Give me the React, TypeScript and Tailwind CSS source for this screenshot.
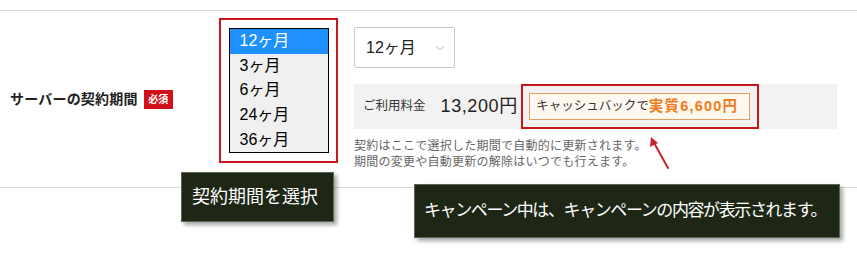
import React from 'react';

const jp = { fontFamily: '"Liberation Sans", "Noto Sans CJK JP", sans-serif' };

const periods = ['12ヶ月', '3ヶ月', '6ヶ月', '24ヶ月', '36ヶ月'];

export default function App() {
  return (
    <div className="relative w-[857px] h-[255px] bg-white overflow-hidden text-[#333]" style={jp}>
      <div className="h-[10px]" />
      <div className="flex h-[178px] border-t border-b border-[#d9d9d9]">
        {/* label */}
        <div className="w-[219px] flex items-center pl-[10px]">
          <span className="text-[14px] font-bold tracking-[0.2px] text-[#222]">サーバーの契約期間</span>
          <span className="ml-[6px] w-[29px] h-[19px] bg-[#d0111b] text-white text-[10px] font-bold flex items-center justify-center">
            必須
          </span>
        </div>

        {/* listbox, outlined in red */}
        <div className="self-start mt-[7px] w-[119px] h-[145px] border-2 border-[#c8161d] flex items-center justify-center">
          <div className="w-[100px] h-[125px] border border-black bg-[#f0f0f0] flex flex-col">
            {periods.map((p, i) => (
              <div
                key={p}
                className={
                  i === 0
                    ? 'h-[24.6px] pl-[10px] flex items-center text-[16px] bg-[#1e90ff] text-white'
                    : 'h-[24.6px] pl-[10px] flex items-center text-[16px] text-black'
                }
              >
                {p}
              </div>
            ))}
          </div>
        </div>

        {/* right column */}
        <div className="ml-[16px] pt-[16px] flex flex-col">
          <div className="w-[101px] h-[41px] border border-[#c8c8c8] rounded-[2px] flex items-center justify-between pl-[11px] pr-[9px]">
            <span className="text-[16px] text-[#222]">12ヶ月</span>
            <svg width="10" height="6" viewBox="0 0 10 6" fill="none">
              <path d="M1 1l4 4 4-4" stroke="#b5b5b5" strokeWidth="1" />
            </svg>
          </div>

          <div className="mt-[16px] w-[483px] h-[45px] bg-[#f2f2f2] flex items-center pl-[9px]">
            <span className="text-[12.5px] text-[#333]">ご利用料金</span>
            <span className="ml-[15px] text-[18px] tracking-[0.6px] text-[#222]">13,200円</span>
            <div className="ml-[3px] w-[238px] h-[45px] border-2 border-[#c8161d] flex items-center justify-center">
              <div className="w-[221px] h-[27px] border border-[#e4a062] bg-[#fff8ef] flex items-center pl-[6px]">
                <span className="text-[12.5px] text-[#333]">キャッシュバックで</span>
                <span className="text-[14.5px] font-bold text-[#f07b1c] tracking-[1.2px]">実質6,600円</span>
              </div>
            </div>
          </div>

          <div className="mt-[9px] text-[12px] leading-[16px] tracking-[0.25px] text-[#666]">
            <p>契約はここで選択した期間で自動的に更新されます。</p>
            <p>期間の変更や自動更新の解除はいつでも行えます。</p>
          </div>
        </div>
      </div>

      {/* red arrow */}
      <svg className="absolute left-[640px] top-[132px]" width="40" height="42" viewBox="0 0 40 42">
        <path d="M28 36 L13 9" stroke="#c4262c" strokeWidth="2" strokeLinecap="round" />
        <path d="M11 5 L10 15 L18 11 Z" fill="#c4262c" />
      </svg>

      {/* callouts */}
      <div className="absolute left-[181px] top-[172px] w-[153px] h-[50px] bg-[#1e2716] border border-[#5d6652] shadow-[3px_3px_4px_rgba(0,0,0,0.35)] flex items-center pl-[10px]">
        <span className="text-[18px] text-white">契約期間を選択</span>
      </div>
      <div className="absolute left-[414px] top-[184px] w-[426px] h-[54px] bg-[#1e2716] border border-[#5d6652] shadow-[3px_3px_4px_rgba(0,0,0,0.35)] flex items-center pl-[9px]">
        <span className="text-[17px] tracking-[-1.4px] text-white">キャンペーン中は、キャンペーンの内容が表示されます。</span>
      </div>
    </div>
  );
}
